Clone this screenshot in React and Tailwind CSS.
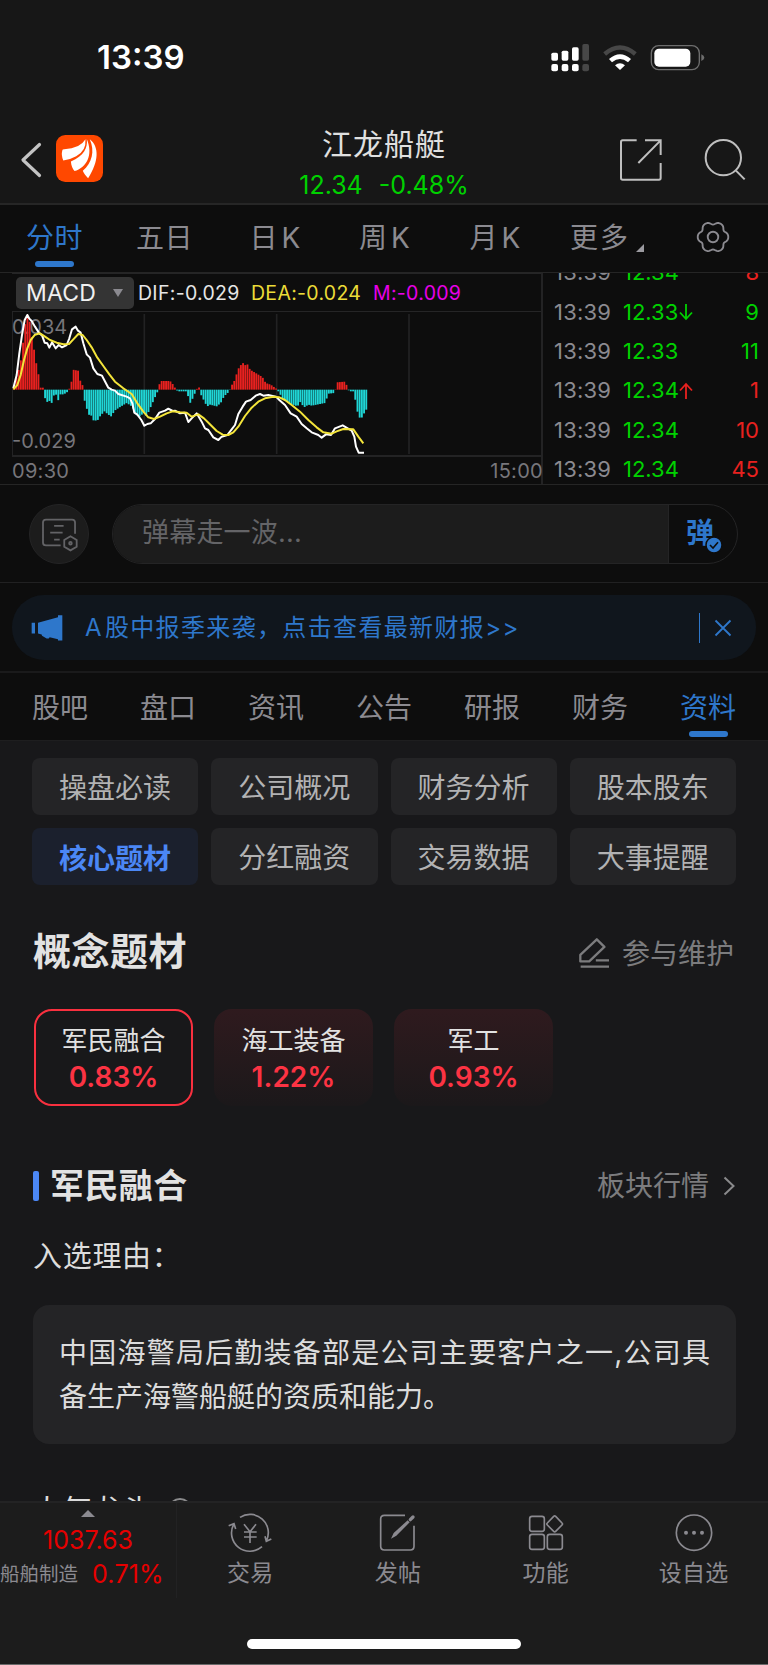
import React from "react";

const toPath = (pts) => "M" + pts.map((p) => p.join(" ")).join("L");

const difLine = [[40,385],[50,345],[58,280],[66,225],[74,180],[82,165],[88,176],[95,183],[105,200],[118,220],[126,226],[134,248],[142,250],[148,263],[156,247],[167,265],[176,255],[186,262],[200,255],[208,235],[216,208],[227,200],[234,212],[242,218],[250,250],[260,283],[270,293],[280,325],[292,342],[306,347],[325,383],[335,389],[345,392],[355,402],[380,410],[390,415],[397,430],[403,458],[412,464],[424,480],[433,497],[442,492],[452,490],[465,477],[478,458],[495,452],[505,446],[518,453],[525,452],[540,460],[555,458],[565,486],[575,475],[590,460],[605,485],[615,505],[625,510],[640,532],[655,540],[665,530],[682,525],[695,508],[705,495],[715,462],[728,440],[738,425],[752,420],[767,407],[780,402],[790,407],[805,405],[828,410],[838,420],[855,435],[872,460],[890,470],[905,492],[920,505],[935,517],[955,525],[965,533],[978,523],[993,525],[1005,505],[1028,496],[1043,505],[1055,512],[1063,530],[1068,560],[1076,578],[1092,578]];
const deaLine = [[40,388],[52,375],[62,345],[72,300],[82,265],[92,240],[105,224],[120,220],[135,230],[150,240],[170,248],[190,253],[207,252],[220,238],[235,222],[248,225],[260,240],[275,262],[292,293],[310,318],[328,343],[345,365],[370,385],[395,402],[412,430],[430,455],[445,472],[462,477],[480,470],[500,460],[518,454],[540,457],[560,458],[575,470],[595,463],[612,475],[632,495],[650,513],[668,524],[685,525],[700,517],[715,500],[735,468],[755,443],[775,425],[795,415],[820,410],[838,412],[855,420],[875,435],[900,455],[925,480],[950,502],[970,517],[995,521],[1010,514],[1030,507],[1060,508],[1075,530],[1090,550]];
const histogram = [[40,5],[48,30],[56,60],[64,95],[70,150],[76,200],[82,225],[90,200],[97,145],[104,110],[110,70],[117,38],[121,6],[129,6],[132,-18],[140,-38],[147,-32],[154,-43],[160,-18],[168,-15],[174,-33],[182,-12],[190,-15],[197,-10],[205,-5],[210,10],[214,22],[218,60],[234,57],[240,28],[247,16],[250,-18],[258,-50],[266,-75],[274,-78],[280,-92],[292,-93],[300,-80],[313,-65],[325,-75],[333,-80],[345,-62],[360,-52],[380,-40],[395,-50],[408,-72],[416,-82],[432,-70],[440,-80],[446,-65],[456,-43],[466,-20],[473,-5],[477,14],[483,26],[510,26],[522,12],[527,0],[535,-5],[560,-5],[567,-30],[572,-43],[578,-25],[588,-3],[592,6],[596,12],[600,-10],[608,-25],[615,-40],[622,-50],[630,-45],[650,-50],[662,-40],[672,-20],[688,-5],[693,10],[705,30],[713,60],[728,82],[733,70],[740,80],[750,60],[787,38],[797,20],[812,15],[830,2],[838,-10],[850,-30],[870,-42],[893,-50],[899,-35],[912,-53],[925,-45],[935,-48],[975,-40],[985,-12],[1003,-10],[1006,0],[1010,22],[1035,24],[1042,8],[1047,-5],[1062,-5],[1067,-40],[1075,-80],[1083,-88],[1090,-75],[1098,-60]];

function histogramAt(x) {
  for (let i = 1; i < histogram.length; i++) {
    const [x0, h0] = histogram[i - 1];
    const [x1, h1] = histogram[i];
    if (x <= x1) return h0 + ((h1 - h0) * (x - x0)) / (x1 - x0);
  }
  return histogram[histogram.length - 1][1];
}

const bars = Array.from({ length: 161 }, (_, i) => {
  const x = 40 + i * 6.6;
  return { x, h: histogramAt(x + 2.6) };
});

function MacdChart() {
  return (
    <svg viewBox="36 156 1590 429" preserveAspectRatio="none" className="relative -ml-px block h-[143px] w-[530px]">
      <g stroke="#222223" strokeWidth="5">
        <path d="M433 162V582M830 162V582M1227 162V582" />
      </g>
      {bars.map((b, i) => (
        <rect key={i} x={b.x} width="5.6" y={b.h > 0 ? 389 - b.h : 389} height={Math.abs(b.h)} fill={b.h > 0 ? "#e8211f" : "#1fd6d6"} />
      ))}
      <path d={toPath(difLine)} fill="none" stroke="#fff" strokeWidth="6" strokeLinejoin="round" />
      <path d={toPath(deaLine)} fill="none" stroke="#f3e43a" strokeWidth="6" strokeLinejoin="round" />
    </svg>
  );
}

function StatusIcons() {
  return (
    <svg viewBox="0 0 462 90" className="h-[30px] w-[154px]">
      <g fill="#fff">
        <rect x="1" y="29" width="20" height="24" rx="5" />
        <rect x="32" y="23" width="20" height="30" rx="5" />
        <rect x="63" y="13" width="20" height="40" rx="5" />
        <rect x="1" y="63" width="20" height="22" rx="6" />
        <rect x="32" y="63" width="20" height="22" rx="6" />
        <rect x="63" y="63" width="20" height="22" rx="6" />
        <g fill="#474747">
          <rect x="94" y="3" width="20" height="50" rx="5" />
          <rect x="94" y="63" width="20" height="22" rx="6" />
        </g>
        <path d="M174 48Q207 20 240 48L231 58Q207 38 183 58Z" />
        <path d="M192 67Q207 55 222 67L207 81Z" />
      </g>
      <path d="M161 33Q207 -6 253 33" fill="none" stroke="#474747" strokeWidth="13" />
      <rect x="301" y="8" width="144" height="72" rx="22" fill="none" stroke="#6d6d6d" strokeWidth="4" />
      <rect x="310" y="17" width="108" height="54" rx="14" fill="#fff" />
      <path d="M451 34Q460 38 460 44Q460 50 451 54Z" fill="#6d6d6d" />
    </svg>
  );
}

function Header() {
  return (
    <header className="flex h-[205px] flex-col border-b-2 border-[#262626] bg-[#171717]">
      <div className="flex h-[115px] justify-between pl-[97px] pr-[63px]">
        <div className="mt-[33px] h-[48px] text-[33px] font-semibold leading-[48px] text-white">13:39</div>
        <div className="mt-[43px]"><StatusIcons /></div>
      </div>
      <div className="grid h-[88px] grid-cols-[200px_1fr_200px]">
        <div className="flex items-start gap-[14px] pl-[20px] pt-[20px]">
          <svg viewBox="0 0 22 36" className="mt-[7px] h-[36px] w-[22px]" fill="none" stroke="#c4c4c4" strokeWidth="3.2" strokeLinecap="round" strokeLinejoin="round">
            <path d="M19.500 2.500L3 18L19.500 33.500" />
          </svg>
          <svg viewBox="168 406 142 142" className="h-[47px] w-[47px]">
            <rect x="168" y="406" width="142" height="142" rx="28" fill="#ff4800" />
            <g fill="#fff">
              <path d="M187 453Q187 449 193 449Q241 447 257 419Q260 454 229 470Q209 481 190 483Q183 467 187 453Z" />
              <path d="M261 418C264 446 253 468 213 486C214 499 218 508 224 515C259 505 282 468 261 418Z" />
              <path d="M270 419C299 441 298 486 265 537C259 529 252 523 249 514C277 491 286 455 270 419Z" />
            </g>
          </svg>
        </div>
        <div className="flex flex-col items-center pt-[9px]">
          <div className="h-[40px] whitespace-nowrap text-[30px] leading-[40px] tracking-[1px] text-[#e0e0e0]">江龙船艇</div>
          <div className="flex h-[38px] gap-[16px] text-[25px] leading-[42px] text-[#00d100]">
            <span>12.34</span>
            <span>-0.48%</span>
          </div>
        </div>
        <div className="flex justify-end gap-[42px] pr-[22px] pt-[24px]">
          <svg viewBox="708 416 126 126" className="h-[42px] w-[42px]" fill="none" stroke="#bfbfbf" strokeWidth="6">
            <path d="M758 420H716Q711 420 711 425V533Q711 538 716 538H825Q830 538 830 533V488M783 420H830V464M830 420L763 488" />
          </svg>
          <svg viewBox="961 416 126 126" className="h-[42px] w-[42px]" fill="none" stroke="#bfbfbf" strokeWidth="6">
            <circle cx="1019" cy="472" r="53" />
            <path d="M1057 511L1083 537" />
          </svg>
        </div>
      </div>
    </header>
  );
}

const gearOutline =
  toPath(
    Array.from({ length: 96 }, (_, i) => {
      const a = (i / 96) * Math.PI * 2;
      const r = 41.5 + 4.2 * Math.cos(6 * a) - 0.8 * Math.cos(12 * a);
      return [(50 + r * Math.cos(a)).toFixed(2), (50 + r * Math.sin(a)).toFixed(2)];
    })
  ) + "Z";

function GearIcon() {
  return (
    <svg viewBox="0 0 100 100" className="h-[34px] w-[34px]" fill="none" stroke="#8b8a90" strokeWidth="5.500" strokeLinejoin="round">
      <path d={gearOutline} />
      <circle cx="50" cy="50" r="15.500" />
    </svg>
  );
}

function ChartTabs() {
  return (
    <nav className="flex h-[67px] bg-[#0d0d0d] text-[28px] leading-[66px] text-[#8b8a90]">
      <div className="flex w-[110px] flex-col items-center pr-px">
        <span className="h-[56px] tracking-[0.500px] text-[#2e77cb]">分时</span>
        <span className="h-[6px] w-[39px] rounded-full bg-[#2e77cb]" />
      </div>
      <div className="w-[107px] pl-[2px] text-center tracking-[0.500px]">五日</div>
      <div className="w-[110px] pl-[10px] text-center tracking-[4px]">日K</div>
      <div className="w-[109px] pl-[10px] text-center tracking-[4px]">周K</div>
      <div className="w-[110px] pl-[12px] text-center tracking-[4px]">月K</div>
      <div className="flex w-[130px] pl-[24px] tracking-[2px]">
        更多
        <svg viewBox="0 0 8 8" className="ml-[6px] mt-[39px] h-[8px] w-[8px]"><path d="M8 0V8H0Z" fill="#9b9aa0" /></svg>
      </div>
      <div className="flex w-[74px] justify-center pt-[15px]"><GearIcon /></div>
    </nav>
  );
}

const trades = [
  { price: "12.34", vol: "8", up: true },
  { price: "12.33", arrow: "down", vol: "9" },
  { price: "12.33", vol: "11" },
  { price: "12.34", arrow: "up", vol: "1", up: true },
  { price: "12.34", vol: "10", up: true },
  { price: "12.34", vol: "45", up: true },
];

function Trades() {
  return (
    <div className="h-[211px] flex-1 overflow-hidden">
      <div className="-mt-[20px] flex flex-col">
        {trades.map((t, i) => (
          <div key={i} className="flex h-[39.400px] shrink-0 items-center pl-[11px] pr-[9px] text-[22px] leading-[39px]">
            <span className="w-[69px] tracking-[0.200px] text-[#8b8a90]">13:39</span>
            <span className="w-[56px] text-[#00d100]">{t.price}</span>
            {t.arrow && (
              <svg viewBox="0 0 14 18" className={t.arrow === "up" ? "h-[18px] w-[14px]" : "h-[18px] w-[14px] rotate-180"} fill="none" stroke={t.arrow === "up" ? "#e8211f" : "#00d100"} strokeWidth="1.800">
                <path d="M7 17V2M1 8.500L7 2L13 8.500" />
              </svg>
            )}
            <span className={t.up ? "ml-auto text-[#e8211f]" : "ml-auto text-[#00d100]"}>{t.vol}</span>
          </div>
        ))}
      </div>
    </div>
  );
}

function ChartPanel() {
  return (
    <section className="flex h-[213px] border-b border-t border-[#252525] bg-[#0d0d0d]">
      <div className="ml-[12px] flex w-[531px] flex-col border-r-2 border-[#232324]">
        <div className="flex h-[39px] items-center border-b border-t border-[#252526] text-[19.500px] leading-[36px]">
          <div className="ml-[4px] flex h-[32px] w-[118px] items-center justify-between rounded-[5px] bg-[#343434] pl-[10px] pr-[11px] text-[23px] tracking-[0.200px] text-[#f0f0f0]">
            MACD
            <svg viewBox="0 0 10 8" className="h-[8px] w-[10px]"><path d="M0 0H10L5 8Z" fill="#8b8a90" /></svg>
          </div>
          <span className="ml-[4px] w-[113px] whitespace-nowrap tracking-[0.300px] text-[#e6e6e6]">DIF:-0.029</span>
          <span className="w-[122px] whitespace-nowrap tracking-[0.300px] text-[#ebdc38]">DEA:-0.024</span>
          <span className="whitespace-nowrap tracking-[0.300px] text-[#e800e8]">M:-0.009</span>
        </div>
        <div className="relative h-[145px] border-b-2 border-l border-[#232324] text-[20px] text-[#77767b]">
          <span className="absolute -left-[1px] top-[2px] leading-[26px]">0.034</span>
          <span className="absolute bottom-[1px] -left-[1px] leading-[26px]">-0.029</span>
          <MacdChart />
        </div>
        <div className="flex h-[27px] justify-between text-[20px] leading-[29px] tracking-[0.300px] text-[#77767b]">
          <span>09:30</span>
          <span className="-mr-[2px]">15:00</span>
        </div>
      </div>
      <Trades />
    </section>
  );
}

function CommentBar() {
  return (
    <section className="flex h-[98px] items-start border-b border-[#212122] bg-[#0d0d0d] pl-[29px] pr-[30px] pt-[19px]">
      <div className="flex h-[60px] w-[60px] items-center justify-center rounded-full border border-[#242425] bg-[#1c1c1c]">
        <svg viewBox="124 114 114 104" className="ml-[2px] mt-[1px] h-[34px] w-[38px]" fill="none" stroke="#636366" strokeWidth="5.500">
          <path d="M227 162V128Q227 119 218 119H138Q129 119 129 128V189Q129 198 138 198H183M163 138H192M151 159H189M163 180H180" />
          <path d="M213 170L232 181V202L213 213L194 202V181Z" />
          <circle cx="213" cy="191" r="4" />
        </svg>
      </div>
      <div className="ml-[23px] flex h-[60px] flex-1 overflow-hidden rounded-full border border-[#242425]">
        <div className="flex-1 border-r border-[#242425] bg-[#1c1c1c] pl-[29px] text-[27px] leading-[55px] tracking-[0.200px] text-[#646467]">弹幕走一波...</div>
        <div className="flex w-[68px] pl-[17px]">
          <span className="w-[28px] text-[28px] font-bold leading-[57px] text-[#2e77cb]">弹</span>
          <svg viewBox="0 0 16 16" className="-ml-[8px] mt-[32px] h-[16px] w-[16px] overflow-visible">
            <circle cx="8" cy="8" r="8" fill="#2e77cb" stroke="#0d0d0d" strokeWidth="1.500" />
            <path d="M4 8L7 11L12 5.200" fill="none" stroke="#0d0d0d" strokeWidth="1.600" />
          </svg>
        </div>
      </div>
    </section>
  );
}

function Banner() {
  return (
    <section className="h-[90px] border-b-2 border-[#1a1a1b] bg-[#0d0d0d] px-[12px] pt-[12px]">
      <div className="flex h-[65px] items-center rounded-[32px] bg-[#10161d] pl-[19px] text-[#2e77cb]">
        <svg viewBox="92 402 96 80" className="h-[27px] w-[32px]" fill="#2e77cb">
          <path d="M94 428H104V460H94ZM113 428L173 411V405H186V481H173V477L148 471L145 475H139L125 467L124 463L113 460Z" />
        </svg>
        <span className="ml-[22px] whitespace-nowrap text-[24px] leading-[64px] tracking-[1.350px]">A<span className="ml-[2px]">股中报季来袭，点击查看最新财报</span>&gt;&gt;</span>
        <span className="ml-auto h-[30px] w-[1px] bg-[#2e77cb]" />
        <svg viewBox="0 0 18 18" className="ml-[14px] mr-[24px] h-[18px] w-[18px]" fill="none" stroke="#2e77cb" strokeWidth="1.800">
          <path d="M1.500 1.500L16.500 16.500M16.500 1.500L1.500 16.500" />
        </svg>
      </div>
    </section>
  );
}

const sections = ["股吧", "盘口", "资讯", "公告", "研报", "财务", "资料"];

function SectionTabs() {
  return (
    <nav className="flex h-[68px] border-b border-[#1e1e1f] bg-[#0d0d0d] px-[6px] text-[28px] text-[#8b8a90]">
      {sections.map((s, i) => (
        <div key={s} className="flex flex-1 flex-col items-center">
          <span className={i === 6 ? "h-[58px] leading-[71px] text-[#2e77cb]" : "h-[58px] leading-[71px]"}>{s}</span>
          {i === 6 && <span className="h-[6px] w-[39px] rounded-full bg-[#2e77cb]" />}
        </div>
      ))}
    </nav>
  );
}

const topics = ["操盘必读", "公司概况", "财务分析", "股本股东", "核心题材", "分红融资", "交易数据", "大事提醒"];

const concepts = [
  { name: "军民融合", pct: "0.83%" },
  { name: "海工装备", pct: "1.22%" },
  { name: "军工", pct: "0.93%" },
];

function Content() {
  return (
    <main className="h-[760px] overflow-hidden bg-[#18181a] px-[32px] pt-[17px]">
      <div className="grid grid-cols-4 gap-x-[13px] gap-y-[13px]">
        {topics.map((t) => (
          <div key={t} className={t === "核心题材" ? "h-[57px] rounded-[8px] bg-[#1b202d] text-center text-[28px] font-bold leading-[62px] text-[#4b87f5]" : "h-[57px] rounded-[8px] bg-[#242426] text-center text-[28px] leading-[61px] text-[#b2b2b3]"}>{t}</div>
        ))}
      </div>
      <div className="mt-[39px] flex h-[54px] items-center justify-between">
        <h2 className="pl-px text-[38px] font-bold leading-[53px] tracking-[0.500px] text-[#e2e2e2]">概念题材</h2>
        <div className="flex items-center pr-[2px] pt-[5px] text-[28px] leading-[58px] text-[#7c7c7e]">
          <svg viewBox="586 592 94 94" className="mr-[12px] h-[31px] w-[31px]" fill="none" stroke="#7c7c7e" strokeWidth="7">
            <path d="M640 596L663 619L617 663H590V643ZM637 660H677M591 679H677" strokeLinejoin="round" />
          </svg>
          参与维护
        </div>
      </div>
      <div className="ml-[2px] mt-[31px] flex gap-[21px]">
        {concepts.map((c, i) => (
          <div key={c.name} className={i === 0 ? "flex h-[97px] w-[159px] flex-col items-center rounded-[18px] border-2 border-[#f9303f] pt-[12px]" : "flex h-[97px] w-[159px] flex-col items-center rounded-[18px] bg-linear-to-b from-[#2f1a1e] to-[#1b181a] pt-[14px]"}>
            <span className="text-[26px] leading-[36px] text-[#e2e2e2]">{c.name}</span>
            <span className="text-[28px] font-semibold leading-[36px] text-[#fc3343]">{c.pct}</span>
          </div>
        ))}
      </div>
      <div className="mt-[54px] flex h-[52px] items-center">
        <span className="ml-[1px] h-[30px] w-[6px] rounded-[2px] bg-[#4b87f5]" />
        <h3 className="ml-[11px] text-[34px] font-bold leading-[52px] tracking-[0.400px] text-[#e2e2e2]">军民融合</h3>
        <span className="ml-auto text-[28px] leading-[52px] text-[#7c7c7e]">板块行情</span>
        <svg viewBox="0 0 12 20" className="ml-[14px] mr-px h-[20px] w-[12px]" fill="none" stroke="#8a8a8c" strokeWidth="2">
          <path d="M1.500 1.500L10.500 10L1.500 18.500" />
        </svg>
      </div>
      <p className="mt-[23px] h-[44px] pl-px text-[29px] leading-[44px] tracking-[0.700px] text-[#dcdcdc]">入选理由：</p>
      <p className="ml-px mt-[26px] h-[139px] w-[703px] rounded-[16px] bg-[#242426] px-[26px] pt-[27px] text-justify text-[28px] leading-[43.500px] text-[#dcdcdc]">中国海警局后勤装备部是公司主要客户之一,公司具备生产海警船艇的资质和能力。</p>
      <div className="mt-[44px] flex h-[44px] items-center text-[30px] leading-[44px] text-[#dcdcdc]">
        人气龙头
        <svg viewBox="0 0 24 24" className="ml-[16px] h-[24px] w-[24px]" fill="none" stroke="#8a8a8c" strokeWidth="2">
          <circle cx="12" cy="12" r="11" />
        </svg>
      </div>
    </main>
  );
}

function TradeIcon() {
  return (
    <svg viewBox="686 98 132 120" className="h-[40px] w-[44px]" fill="none" stroke="#8b8a90" strokeWidth="5">
      <path d="M722 111A55 55 0 0 1 801 182M788 199A55 55 0 0 1 703 132M688 136L704 130L709 146M816 176L801 183L797 168" />
      <path d="M734 132L752 154L770 132M752 154V188M734 155H772M734 170H772" />
    </svg>
  );
}

function PostIcon() {
  return (
    <svg viewBox="-10 98 120 120" className="ml-[2px] h-[40px] w-[40px]" fill="none" stroke="#8b8a90" strokeWidth="5">
      <path d="M68 105H6Q-5 105 -5 116V198Q-5 209 6 209H84Q95 209 95 198V136" />
      <path d="M26 175L34 158L76 120L82 126L42 166Z" fill="#8b8a90" stroke="none" />
      <path d="M84 118L92 110" strokeWidth="10" strokeLinecap="round" />
    </svg>
  );
}

function GridIcon() {
  return (
    <svg viewBox="428 98 120 120" className="h-[40px] w-[40px]" fill="none" stroke="#8b8a90" strokeWidth="5" strokeLinejoin="round">
      <rect x="439" y="108" width="44" height="45" rx="7" />
      <rect x="439" y="162" width="44" height="45" rx="7" />
      <rect x="492" y="162" width="45" height="45" rx="7" />
      <path d="M511 108Q514 105 517 108L536 128Q539 131 536 134L517 153Q514 156 511 153L492 134Q489 131 492 128Z" />
    </svg>
  );
}

function MoreIcon() {
  return (
    <svg viewBox="870 98 120 120" className="h-[40px] w-[40px]">
      <circle cx="930" cy="157" r="53" fill="none" stroke="#8b8a90" strokeWidth="5" />
      <g fill="#8b8a90"><circle cx="906" cy="157" r="6" /><circle cx="930" cy="157" r="6" /><circle cx="954" cy="157" r="6" /></g>
    </svg>
  );
}

const actions = [
  { label: "交易", Icon: TradeIcon },
  { label: "发帖", Icon: PostIcon },
  { label: "功能", Icon: GridIcon },
  { label: "设自选", Icon: MoreIcon },
];

function BottomBar() {
  return (
    <footer className="flex h-[164px] flex-col border-b border-t-2 border-b-[#6a6a6a] border-t-[#232324] bg-[#1c1c1c]">
      <div className="flex h-[95px]">
        <div className="flex w-[177px] flex-col items-center border-r border-[#222223]">
          <svg viewBox="0 0 14 7" className="mt-[7px] h-[7px] w-[14px]"><path d="M7 0L14 7H0Z" fill="#8b8a90" /></svg>
          <span className="mt-[6px] h-[34px] text-[25px] leading-[34px] text-[#e60000]">1037.63</span>
          <div className="flex h-[34px] w-full items-center">
            <span className="whitespace-nowrap text-[19.500px] leading-[34px] text-[#8b8a90]">船舶制造</span>
            <span className="ml-[14px] text-[25px] leading-[34px] tracking-[0.200px] text-[#e60000]">0.71%</span>
          </div>
        </div>
        {actions.map(({ label, Icon }) => (
          <div key={label} className="flex flex-1 flex-col items-center pr-px pt-[10px]">
            <Icon />
            <span className="mt-[3px] text-[23px] leading-[34px] tracking-[0.300px] text-[#8b8a90]">{label}</span>
          </div>
        ))}
      </div>
      <div className="mx-auto mt-[41px] h-[10px] w-[274px] rounded-full bg-white" />
    </footer>
  );
}

export default function App() {
  return (
    <div className="h-[1665px] w-[768px] overflow-hidden bg-[#0d0d0d] font-['Inter','Noto_Sans_CJK_SC',sans-serif]">
      <Header />
      <ChartTabs />
      <ChartPanel />
      <CommentBar />
      <Banner />
      <SectionTabs />
      <Content />
      <BottomBar />
    </div>
  );
}
